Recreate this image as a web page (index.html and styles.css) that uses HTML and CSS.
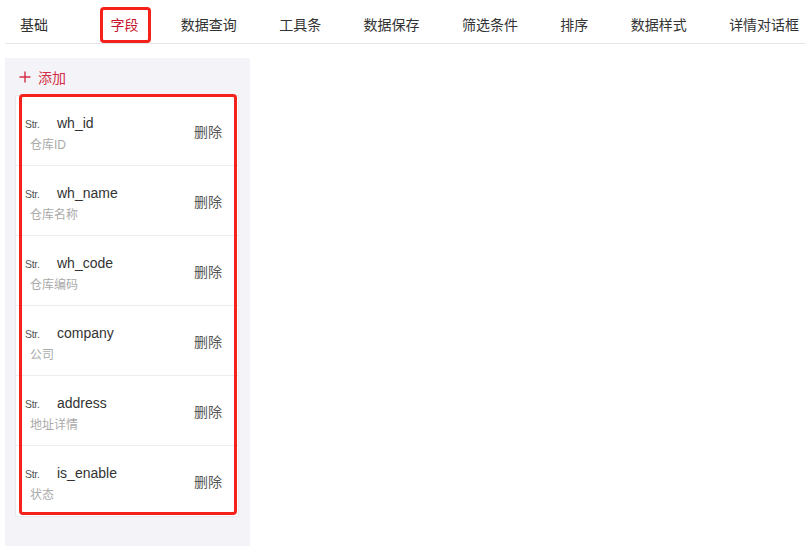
FILE: index.html
```html
<!DOCTYPE html>
<html lang="zh">
<head>
  <meta charset="UTF-8">
  <title>字段</title>
  <link rel="stylesheet" href="styles.css">
</head>
<body>
  <div class="page">
    <nav class="tabs">
      <span class="tab first">基础</span>
      <span class="tab active">字段</span>
      <span class="tab">数据查询</span>
      <span class="tab">工具条</span>
      <span class="tab">数据保存</span>
      <span class="tab">筛选条件</span>
      <span class="tab">排序</span>
      <span class="tab">数据样式</span>
      <span class="tab">详情对话框</span>
    </nav>

    <aside class="panel">
      <div class="add">
        <svg class="plus" width="12" height="12" viewBox="0 0 12 12"><path d="M6 0.5V11.5M0.5 6H11.5" stroke="currentColor" stroke-width="1.4" fill="none"/></svg>
        <span>添加</span>
      </div>

      <ul class="fields">
        <li class="field">
          <div class="info">
            <div class="top"><span class="type">Str.</span><span class="name">wh_id</span></div>
            <div class="desc">仓库ID</div>
          </div>
          <span class="del">删除</span>
        </li>
        <li class="field">
          <div class="info">
            <div class="top"><span class="type">Str.</span><span class="name">wh_name</span></div>
            <div class="desc">仓库名称</div>
          </div>
          <span class="del">删除</span>
        </li>
        <li class="field">
          <div class="info">
            <div class="top"><span class="type">Str.</span><span class="name">wh_code</span></div>
            <div class="desc">仓库编码</div>
          </div>
          <span class="del">删除</span>
        </li>
        <li class="field">
          <div class="info">
            <div class="top"><span class="type">Str.</span><span class="name">company</span></div>
            <div class="desc">公司</div>
          </div>
          <span class="del">删除</span>
        </li>
        <li class="field">
          <div class="info">
            <div class="top"><span class="type">Str.</span><span class="name">address</span></div>
            <div class="desc">地址详情</div>
          </div>
          <span class="del">删除</span>
        </li>
        <li class="field">
          <div class="info">
            <div class="top"><span class="type">Str.</span><span class="name">is_enable</span></div>
            <div class="desc">状态</div>
          </div>
          <span class="del">删除</span>
        </li>
      </ul>
    </aside>
  </div>
</body>
</html>
```

FILE: styles.css
```css
html, body { margin: 0; height: 100%; background: #fff; overflow: hidden; }
body { font-family: "Liberation Sans", "Noto Sans CJK SC", sans-serif; color: #333; }
.page { padding-left: 5px; height: 100%; display: flex; flex-direction: column; }

.tabs { display: flex; gap: 42.4px; height: 36px; padding: 7px 0 0 15px; border-bottom: 1px solid #e6e6ea; white-space: nowrap; }
.tab { position: relative; font-size: 14px; line-height: 36px; color: #333; }
.tab.first { margin-right: 20px; }
.tab.active { color: #c9162f; }
.tab.active::after { content: ""; position: absolute; top: 0; bottom: 0; left: -10px; right: -13px; border: 3px solid #f5221b; border-radius: 4px; }

.panel { width: 224px; flex: 1; margin-top: 14px; padding: 9px 11px 0 10px; background: #f4f4f8; }
.add { display: flex; align-items: center; gap: 7px; height: 20px; padding-left: 4px; font-size: 14px; color: #d22d47; }
.plus { display: block; }

.fields { position: relative; list-style: none; margin: 8px 0 0; padding: 0; background: #fff; border: 1px solid #e9e9ee; }
.fields::after { content: ""; position: absolute; top: -2px; left: 3px; right: 1px; bottom: 1px; border: 3px solid #f5221b; border-radius: 4px; }
.field { display: flex; align-items: flex-start; height: 70px; box-sizing: border-box; padding: 17px 16px 0 9px; border-bottom: 1px solid #ececf0; }
.field:last-child { border-bottom: none; }
.info { flex: 1; }
.top { display: flex; align-items: baseline; }
.type { width: 32px; font-size: 10.5px; color: #555; letter-spacing: -0.3px; }
.name { font-size: 14px; line-height: 20px; color: #333; }
.desc { margin: 3px 0 0 5px; font-size: 12px; line-height: 18px; color: #aaa; }
.del { font-size: 14px; line-height: 20px; color: #555; margin-top: 9px; }
```
